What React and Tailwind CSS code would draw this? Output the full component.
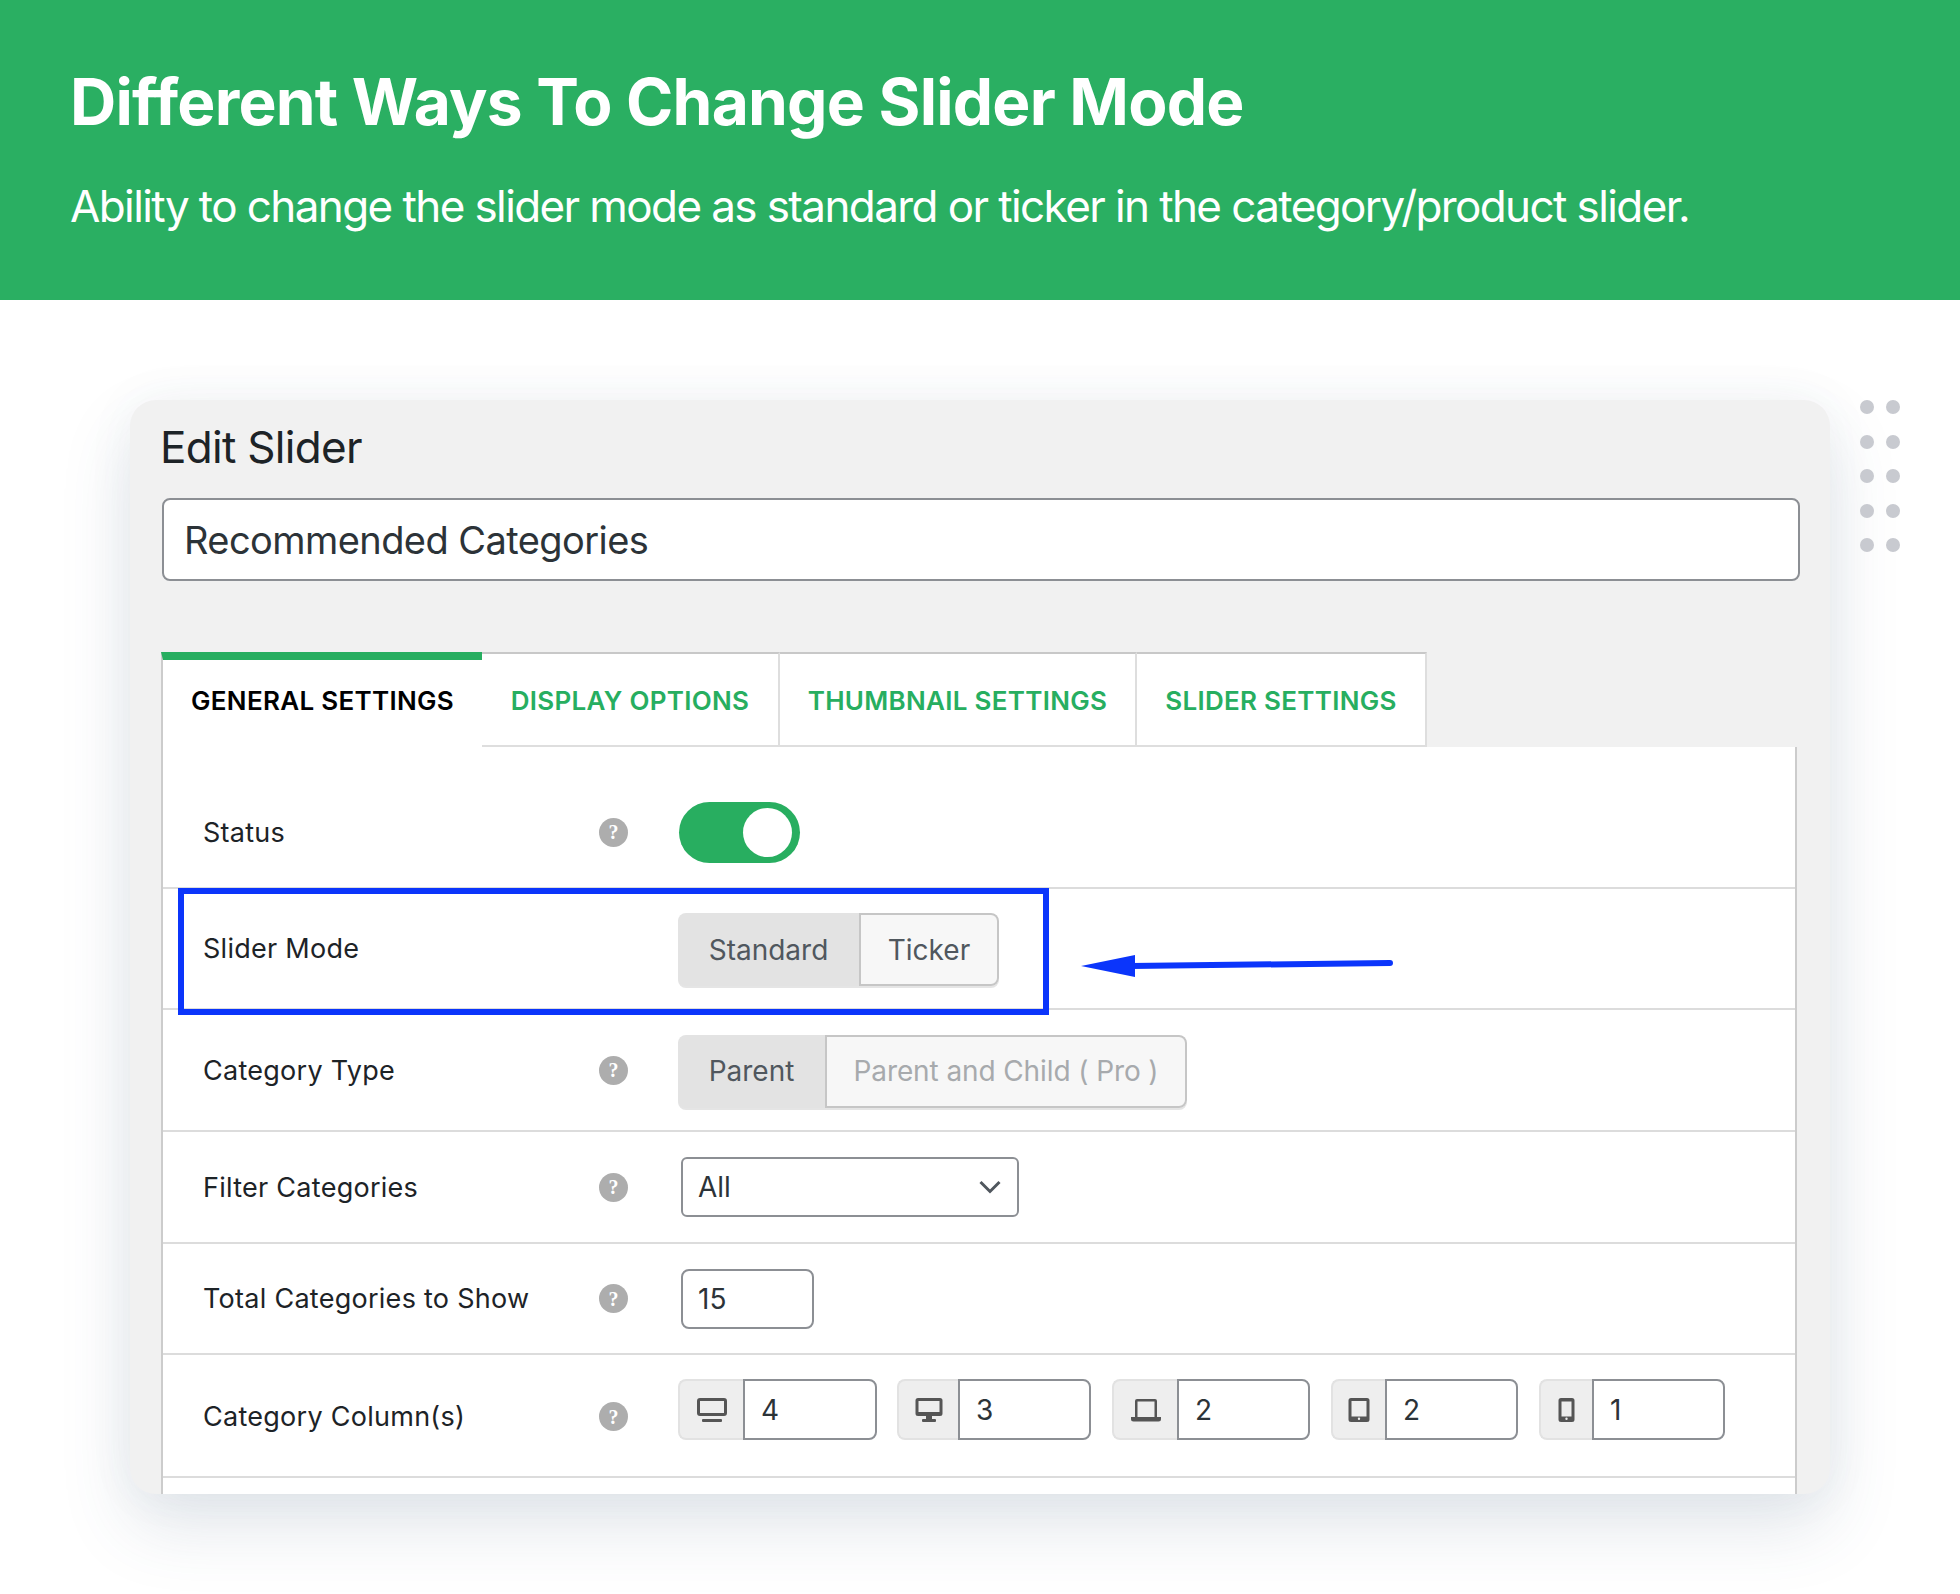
const font = { fontFamily: "Inter, 'Liberation Sans', sans-serif" };

function Help() {
  return (
    <span className="flex h-[29px] w-[29px] shrink-0 items-center justify-center rounded-full bg-[#adadad] text-[20px] font-bold leading-none text-white [font-family:'Liberation_Serif',serif]">
      ?
    </span>
  );
}

function Label({ children, help = true, className = "" }) {
  return (
    <div className={`flex w-[476px] shrink-0 items-center ${className}`}>
      <span className="w-[396px] shrink-0 text-[27px] leading-none tracking-[0.27px] text-[#1d2327]">{children}</span>
      {help && <Help />}
    </div>
  );
}

function Row({ h, children, last, className = "" }) {
  return (
    <div className={`flex shrink-0 items-center pl-[40px] ${last ? "" : "border-b-2 border-[#dcdcdc]"} ${className}`} style={{ height: h }}>
      {children}
    </div>
  );
}

function Segmented({ left, right, leftW, rightW, muted }) {
  return (
    <div className="ml-[-1px] mt-[2px] flex h-[73px] overflow-hidden rounded-[8px] bg-[#e3e3e3] text-[28px] leading-none shadow-[0_2px_0_#e5e5e5]">
      <div className="flex items-center justify-center text-[#50575e]" style={{ width: leftW }}>{left}</div>
      <div
        className={`flex items-center justify-center rounded-r-[8px] border-2 border-[#c6c6c6] bg-[#f7f7f7] ${muted ? "tracking-[-0.1px] text-[#a7aaad]" : "text-[#50575e]"}`}
        style={{ width: rightW }}
      >
        {right}
      </div>
    </div>
  );
}

const I1 = (
  <svg width="32" height="26" viewBox="0 0 32 26" fill="#555">
    <path fillRule="evenodd" d="M4 1h24a3 3 0 0 1 3 3v12a3 3 0 0 1-3 3H4a3 3 0 0 1-3-3V4a3 3 0 0 1 3-3zm0 3v12h24V4z" />
    <rect x="6" y="22" width="20" height="3" rx="1" />
  </svg>
);
const I2 = (
  <svg width="28" height="26" viewBox="0 0 28 26" fill="#555">
    <path fillRule="evenodd" d="M3 1h22a2.500 2.500 0 0 1 2.500 2.500v13a2.500 2.500 0 0 1-2.500 2.500H3a2.500 2.500 0 0 1-2.500-2.500v-13A2.500 2.500 0 0 1 3 1zm.500 3v11h21V4z" />
    <rect x="11" y="19" width="6" height="4" />
    <rect x="7" y="22" width="14" height="3" rx="1" />
  </svg>
);
const I3 = (
  <svg width="30" height="24" viewBox="0 0 30 24" fill="#555">
    <path fillRule="evenodd" d="M6 1h18a2 2 0 0 1 2 2v16h-2.500V3.500h-17V19H4V3a2 2 0 0 1 2-2z" />
    <path d="M0 19h30v2a2.500 2.500 0 0 1-2.500 2.500h-25A2.500 2.500 0 0 1 0 21z" />
  </svg>
);
const I4 = (
  <svg width="22" height="26" viewBox="0 0 22 26" fill="#555">
    <path fillRule="evenodd" d="M3 1h16a2.500 2.500 0 0 1 2.500 2.500v19A2.500 2.500 0 0 1 19 25H3a2.500 2.500 0 0 1-2.500-2.500v-19A2.500 2.500 0 0 1 3 1zm.500 3v15.500h15V4zM11 20.500a1.200 1.200 0 1 0 0 2.400 1.200 1.200 0 0 0 0-2.400z" />
  </svg>
);
const I5 = (
  <svg width="17" height="26" viewBox="0 0 17 26" fill="#555">
    <path fillRule="evenodd" d="M3 1h11a2.500 2.500 0 0 1 2.500 2.500v19A2.500 2.500 0 0 1 14 25H3a2.500 2.500 0 0 1-2.500-2.500v-19A2.500 2.500 0 0 1 3 1zm.500 3.500v15h10v-15zM8.500 20.500a1.200 1.200 0 1 0 0 2.400 1.200 1.200 0 0 0 0-2.400z" />
  </svg>
);

function ColInput({ icon, value, iconW, totalW, ml }) {
  return (
    <div className="flex h-[61px] rounded-[8px]" style={{ width: totalW, marginLeft: ml }}>
      <div className="flex items-center justify-center rounded-l-[8px] border-2 border-r-0 border-[#e2e2e2] bg-[#eeeeee]" style={{ width: iconW }}>
        {icon}
      </div>
      <div className="flex flex-1 items-center rounded-r-[8px] border-2 border-[#8c8f94] bg-white pl-[16px] text-[28px] leading-none text-[#2c3338]">
        {value}
      </div>
    </div>
  );
}

export default function App() {
  const tabs = [
    ["DISPLAY OPTIONS", 298],
    ["THUMBNAIL SETTINGS", 357],
    ["SLIDER SETTINGS", 290],
  ];
  return (
    <div className="h-[1594px] w-[1960px] overflow-hidden bg-white" style={font}>
      <header className="flex h-[300px] flex-col bg-[#2aaf62] pl-[70px] text-white">
        <h1 className="mt-[66px] text-[64px] font-bold leading-[72px] tracking-[-0.78px]">Different Ways To Change Slider Mode</h1>
        <p className="mt-[43px] text-[44px] font-normal leading-[50px] tracking-[-1.6px]">
          Ability to change the slider mode as standard or ticker in the category/product slider.
        </p>
      </header>

      <main className="flex pl-[130px] pt-[100px]">
        <section className="flex h-[1094px] w-[1700px] shrink-0 flex-col overflow-hidden rounded-[26px] bg-[#f1f1f1] pl-[31px] pr-[33px] shadow-[0_32px_70px_rgba(60,90,120,0.15),0_0_50px_rgba(60,90,120,0.05)]">
          <h2 className="ml-[-1px] mt-[22px] text-[44px] font-normal leading-[50px] tracking-[-0.7px] text-[#1d2327]">Edit Slider</h2>
          <div className="ml-[1px] mr-[-3px] mt-[26px] flex h-[83px] items-center rounded-[8px] border-2 border-[#8c8f94] bg-white pl-[20px] text-[38px] leading-none tracking-[-0.57px] text-[#2c3338]">
            Recommended Categories
          </div>

          <nav className="mt-[71px] flex h-[95px] shrink-0 text-[26px] font-semibold leading-none tracking-[0.3px]">
            <div className="flex w-[321px] items-center justify-center border-l-2 border-t-8 border-l-[#cccccc] border-t-[#27ae60] bg-white pb-[6px] text-black">
              GENERAL SETTINGS
            </div>
            {tabs.map(([t, w]) => (
              <div
                key={t}
                className="flex items-center justify-center border-b-2 border-r-2 border-t-2 border-b-[#dedede] border-r-[#dedede] border-t-[#c8c8c8] bg-white pt-[2px] text-[#27ae60] first:border-l-2"
                style={{ width: w }}
              >
                {t}
              </div>
            ))}
          </nav>

          <div className="relative flex min-h-0 flex-1 flex-col border-x-2 border-[#cccccc] bg-white">
            <Row h={142} className="pt-[30px]">
              <Label>Status</Label>
              <div className="flex h-[61px] w-[121px] items-center justify-end rounded-full bg-[#28ae60] pr-[8px]">
                <span className="h-[49px] w-[49px] rounded-full bg-white" />
              </div>
            </Row>
            <Row h={121}>
              <Label help={false}>Slider Mode</Label>
              <Segmented left="Standard" right="Ticker" leftW={181} rightW={140} />
            </Row>
            <Row h={122}>
              <Label>Category Type</Label>
              <Segmented left="Parent" right="Parent and Child ( Pro )" leftW={147} rightW={362} muted />
            </Row>
            <Row h={112}>
              <Label>Filter Categories</Label>
              <div className="ml-[2px] flex h-[60px] w-[338px] items-center justify-between rounded-[6px] border-2 border-[#8c8f94] bg-white pl-[15px] pr-[16px] text-[28px] leading-none text-[#2c3338]">
                All
                <svg width="22" height="14" viewBox="0 0 22 14" fill="none" stroke="#50575e" strokeWidth="3">
                  <path d="M1.500 2 11 11.500 20.500 2" />
                </svg>
              </div>
            </Row>
            <Row h={111}>
              <Label>Total Categories to Show</Label>
              <div className="ml-[2px] flex h-[60px] w-[133px] items-center rounded-[8px] border-2 border-[#8c8f94] bg-white pl-[15px] text-[28px] leading-none text-[#2c3338]">
                15
              </div>
            </Row>
            <Row h={123}>
              <Label className="pt-[2px]">Category Column(s)</Label>
              <div className="ml-[-1px] flex pb-[12px]">
                <ColInput icon={I1} value="4" iconW={65} totalW={199} ml={0} />
                <ColInput icon={I2} value="3" iconW={61} totalW={194} ml={20} />
                <ColInput icon={I3} value="2" iconW={65} totalW={198} ml={21} />
                <ColInput icon={I4} value="2" iconW={54} totalW={187} ml={21} />
                <ColInput icon={I5} value="1" iconW={53} totalW={186} ml={21} />
              </div>
            </Row>

            <div className="absolute left-[15px] top-[141px] h-[127px] w-[871px] border-[6px] border-[#0b35fb]" />
            <svg className="absolute left-[918px] top-[198px]" width="316" height="32" viewBox="0 0 316 32" fill="#0b35fb">
              <path d="M0 21 54 10V32z" />
              <path d="M50 18 309 15a3 3 0 0 1 0 6L50 24z" />
            </svg>
          </div>
        </section>

        <div className="ml-[30px] grid h-fit grid-cols-2 gap-x-[12px] gap-y-[20.500px]">
          {Array.from({ length: 10 }).map((_, i) => (
            <span key={i} className="h-[14px] w-[14px] rounded-full bg-[#c8cad0]" />
          ))}
        </div>
      </main>
    </div>
  );
}
